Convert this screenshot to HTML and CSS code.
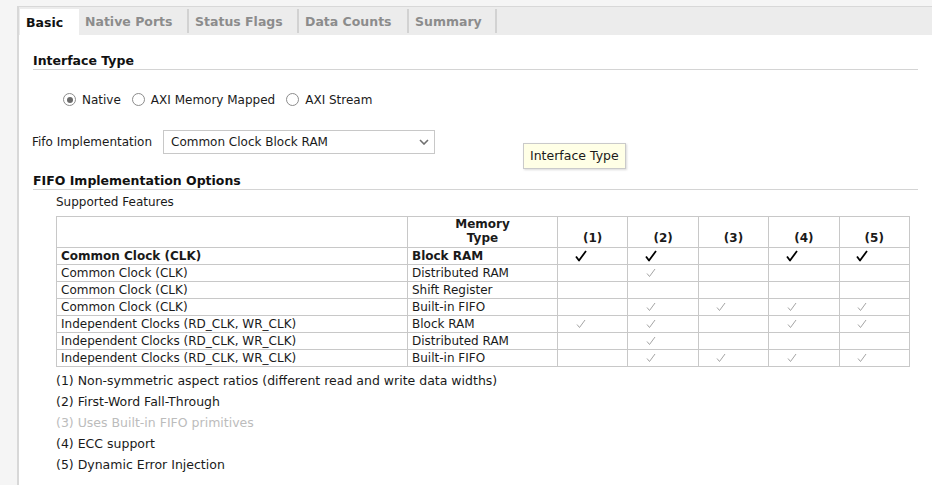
FILE: index.html
```html
<!DOCTYPE html>
<html>
<head>
<meta charset="utf-8">
<link rel="stylesheet" href="styles.css">
</head>
<body>
<div class="panel">
  <div class="tabs">
    <div class="tab active w-basic">Basic</div>
    <div class="tab w-std">Native Ports</div>
    <div class="tab w-std">Status Flags</div>
    <div class="tab w-std">Data Counts</div>
    <div class="tab w-sum">Summary</div>
  </div>
  <div class="content">
    <div class="section-title">Interface Type</div>
    <div class="radios">
      <label class="radio"><span class="circle checked"></span>Native</label>
      <label class="radio"><span class="circle"></span>AXI Memory Mapped</label>
      <label class="radio"><span class="circle"></span>AXI Stream</label>
    </div>
    <div class="field">
      <span class="field-label">Fifo Implementation</span>
      <div class="combo">
        <span>Common Clock Block RAM</span>
        <svg class="chev" width="10" height="6" viewBox="0 0 10 6"><path d="M1 1 L5 5 L9 1" fill="none" stroke="#707070" stroke-width="1.6"/></svg>
      </div>
    </div>
    <div class="section-title second">FIFO Implementation Options</div>
    <div class="sub">Supported Features</div>
    <table class="features">
      <colgroup>
        <col class="c-clk"><col class="c-mem"><col class="c-n"><col class="c-n"><col class="c-n"><col class="c-n"><col class="c-n">
      </colgroup>
      <thead>
        <tr><th></th><th>Memory<br>Type</th><th>(1)</th><th>(2)</th><th>(3)</th><th>(4)</th><th>(5)</th></tr>
      </thead>
      <tbody>
        <tr class="sel"><td>Common Clock (CLK)</td><td>Block RAM</td><td class="ck"><svg class="bk" width="12" height="12" viewBox="0 0 12 12"><path d="M1 6.5 L4 10.5 L11 1" fill="none" stroke="#000" stroke-width="1.8" stroke-linejoin="round"/></svg></td><td class="ck"><svg class="bk" width="12" height="12" viewBox="0 0 12 12"><path d="M1 6.5 L4 10.5 L11 1" fill="none" stroke="#000" stroke-width="1.8" stroke-linejoin="round"/></svg></td><td></td><td class="ck"><svg class="bk" width="12" height="12" viewBox="0 0 12 12"><path d="M1 6.5 L4 10.5 L11 1" fill="none" stroke="#000" stroke-width="1.8" stroke-linejoin="round"/></svg></td><td class="ck"><svg class="bk" width="12" height="12" viewBox="0 0 12 12"><path d="M1 6.5 L4 10.5 L11 1" fill="none" stroke="#000" stroke-width="1.8" stroke-linejoin="round"/></svg></td></tr>
        <tr><td>Common Clock (CLK)</td><td>Distributed RAM</td><td></td><td class="ck"><svg class="gy" width="10" height="10" viewBox="0 0 10 10"><path d="M1 5.5 L3.5 8.5 L9 1" fill="none" stroke="#a4a4a4" stroke-width="1"/></svg></td><td></td><td></td><td></td></tr>
        <tr><td>Common Clock (CLK)</td><td>Shift Register</td><td></td><td></td><td></td><td></td><td></td></tr>
        <tr><td>Common Clock (CLK)</td><td>Built-in FIFO</td><td></td><td class="ck"><svg class="gy" width="10" height="10" viewBox="0 0 10 10"><path d="M1 5.5 L3.5 8.5 L9 1" fill="none" stroke="#a4a4a4" stroke-width="1"/></svg></td><td class="ck"><svg class="gy" width="10" height="10" viewBox="0 0 10 10"><path d="M1 5.5 L3.5 8.5 L9 1" fill="none" stroke="#a4a4a4" stroke-width="1"/></svg></td><td class="ck"><svg class="gy" width="10" height="10" viewBox="0 0 10 10"><path d="M1 5.5 L3.5 8.5 L9 1" fill="none" stroke="#a4a4a4" stroke-width="1"/></svg></td><td class="ck"><svg class="gy" width="10" height="10" viewBox="0 0 10 10"><path d="M1 5.5 L3.5 8.5 L9 1" fill="none" stroke="#a4a4a4" stroke-width="1"/></svg></td></tr>
        <tr><td>Independent Clocks (RD_CLK, WR_CLK)</td><td>Block RAM</td><td class="ck"><svg class="gy" width="10" height="10" viewBox="0 0 10 10"><path d="M1 5.5 L3.5 8.5 L9 1" fill="none" stroke="#a4a4a4" stroke-width="1"/></svg></td><td class="ck"><svg class="gy" width="10" height="10" viewBox="0 0 10 10"><path d="M1 5.5 L3.5 8.5 L9 1" fill="none" stroke="#a4a4a4" stroke-width="1"/></svg></td><td></td><td class="ck"><svg class="gy" width="10" height="10" viewBox="0 0 10 10"><path d="M1 5.5 L3.5 8.5 L9 1" fill="none" stroke="#a4a4a4" stroke-width="1"/></svg></td><td class="ck"><svg class="gy" width="10" height="10" viewBox="0 0 10 10"><path d="M1 5.5 L3.5 8.5 L9 1" fill="none" stroke="#a4a4a4" stroke-width="1"/></svg></td></tr>
        <tr><td>Independent Clocks (RD_CLK, WR_CLK)</td><td>Distributed RAM</td><td></td><td class="ck"><svg class="gy" width="10" height="10" viewBox="0 0 10 10"><path d="M1 5.5 L3.5 8.5 L9 1" fill="none" stroke="#a4a4a4" stroke-width="1"/></svg></td><td></td><td></td><td></td></tr>
        <tr><td>Independent Clocks (RD_CLK, WR_CLK)</td><td>Built-in FIFO</td><td></td><td class="ck"><svg class="gy" width="10" height="10" viewBox="0 0 10 10"><path d="M1 5.5 L3.5 8.5 L9 1" fill="none" stroke="#a4a4a4" stroke-width="1"/></svg></td><td class="ck"><svg class="gy" width="10" height="10" viewBox="0 0 10 10"><path d="M1 5.5 L3.5 8.5 L9 1" fill="none" stroke="#a4a4a4" stroke-width="1"/></svg></td><td class="ck"><svg class="gy" width="10" height="10" viewBox="0 0 10 10"><path d="M1 5.5 L3.5 8.5 L9 1" fill="none" stroke="#a4a4a4" stroke-width="1"/></svg></td><td class="ck"><svg class="gy" width="10" height="10" viewBox="0 0 10 10"><path d="M1 5.5 L3.5 8.5 L9 1" fill="none" stroke="#a4a4a4" stroke-width="1"/></svg></td></tr>
      </tbody>
    </table>
    <ul class="legend">
      <li>(1) Non-symmetric aspect ratios (different read and write data widths)</li>
      <li>(2) First-Word Fall-Through</li>
      <li class="dim">(3) Uses Built-in FIFO primitives</li>
      <li>(4) ECC support</li>
      <li>(5) Dynamic Error Injection</li>
    </ul>
  </div>
  <div class="tooltip">Interface Type</div>
</div>
</body>
</html>
```

FILE: styles.css
```css
html, body {
  margin: 0;
  padding: 0;
  background: #f5f5f5;
  font-family: "DejaVu Sans", "Liberation Sans", sans-serif;
  color: #1a1a1a;
}
.panel {
  margin: 6px 0 0 17px;
  height: 479px;
  background: #ffffff;
  border-left: 2px solid #d8d8d8;
  border-top: 1px solid #d8d8d8;
  box-sizing: border-box;
  position: relative;
}
.tabs {
  display: flex;
  height: 28px;
  background: #ececec;
  padding-left: 1px;
  align-items: flex-end;
}
.tab {
  box-sizing: border-box;
  height: 24px;
  margin-bottom: 2px;
  padding-left: 6px;
  display: flex;
  align-items: center;
  white-space: nowrap;
  font-size: 12.5px;
  font-weight: bold;
  color: #8c8c8c;
  border-right: 2px solid #d2d2d2;
}
.tab.active {
  height: 26px;
  margin-bottom: 0;
  padding-top: 1px;
  background: #ffffff;
  color: #111111;
  border-right: none;
}
.w-basic { width: 59px; }
.w-std { width: 110px; }
.w-sum { width: 88px; }
.content {
  padding: 18px 14px 0 14px;
}
.section-title {
  font-size: 12.5px;
  font-weight: bold;
  line-height: 15px;
  color: #111;
  padding-bottom: 1px;
  border-bottom: 1px solid #d4d4d4;
}
.section-title.second { margin-top: 19px; }
.radios {
  display: flex;
  gap: 11px;
  height: 15px;
  margin: 22px 0 0 30px;
  font-size: 12px;
}
.radio {
  display: flex;
  align-items: center;
  gap: 6px;
}
.circle {
  width: 11px;
  height: 11px;
  border: 1px solid #8c8c8c;
  border-radius: 50%;
  background: #fff;
  position: relative;
}
.circle.checked::after {
  content: "";
  position: absolute;
  left: 2.5px;
  top: 2.5px;
  width: 6px;
  height: 6px;
  border-radius: 50%;
  background: #6a6a6a;
}
.field {
  display: flex;
  align-items: center;
  margin-top: 23px;
  margin-left: -1px;
}
.field-label {
  font-size: 12px;
  width: 131px;
}
.combo {
  box-sizing: border-box;
  width: 272px;
  height: 24px;
  border: 1px solid #c8c8c8;
  display: flex;
  align-items: center;
  justify-content: space-between;
  padding: 0 5px 0 7px;
  font-size: 12px;
}
.sub {
  font-size: 12px;
  line-height: 14px;
  margin: 5px 0 0 23px;
}
.features {
  border-collapse: collapse;
  margin: 7px 0 0 23px;
  width: 854px;
  font-size: 12px;
  table-layout: fixed;
  background: #fff;
}
.c-clk { width: 351px; }
.c-mem { width: 150px; }
.features th, .features td {
  border: 1px solid #c8c8c8;
  padding: 0 4px;
  height: 16px;
  line-height: 15px;
  white-space: nowrap;
}
.features th {
  height: 28px;
  line-height: 14px;
  vertical-align: bottom;
  text-align: center;
  font-weight: bold;
  padding-bottom: 2px;
}
.features tr.sel td { font-weight: bold; }
.features td.ck {
  text-align: center;
  padding-right: 28px;
  line-height: 0;
}
.features td.ck svg { vertical-align: middle; }
.legend {
  list-style: none;
  margin: 3px 0 0 23px;
  padding: 0;
  font-size: 12.5px;
}
.legend li {
  height: 21px;
  line-height: 21px;
}
.legend li.dim { color: #bcbcbc; }
.tooltip {
  position: absolute;
  left: 504px;
  top: 136px;
  background: #ffffe6;
  border: 1px solid #cacaca;
  box-shadow: 1px 1px 2px rgba(0,0,0,0.15);
  font-size: 12.5px;
  padding: 4px 6px 5px 6px;
  color: #1a1a1a;
}
```
